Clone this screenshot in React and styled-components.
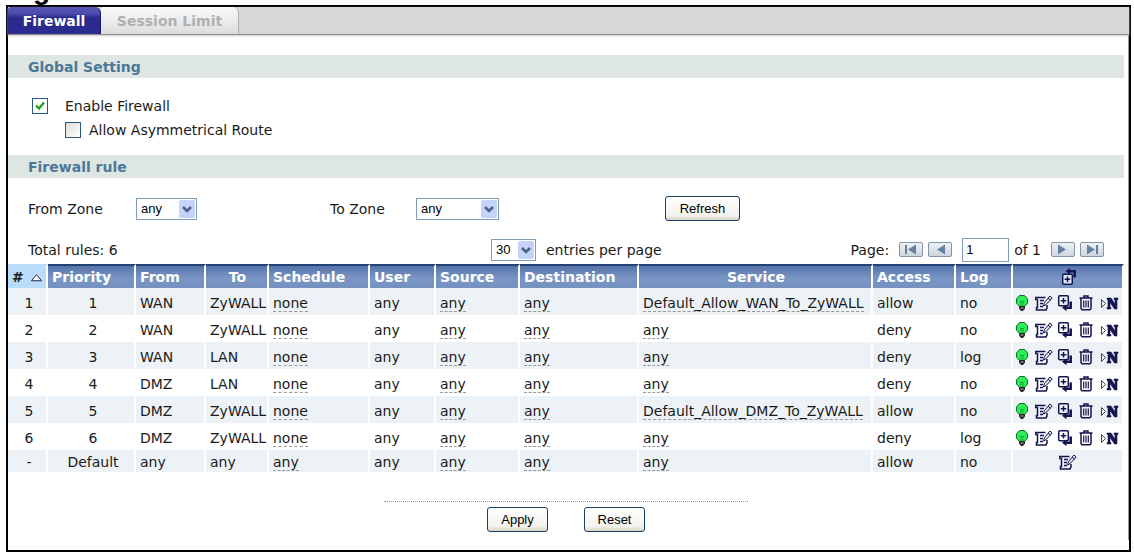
import React, { useState } from "react"
import styled, { createGlobalStyle } from "styled-components"

const NAVY = "#14144f"

const GlobalStyle = createGlobalStyle`
  * {
    box-sizing: border-box;
  }

  body {
    margin: 0;
    background: #fff;
    color: #1a1a1a;
    font-family: "DejaVu Sans", Verdana, sans-serif;
    font-size: 14px;
    line-height: 16px;
  }
`

// only the descenders of the heading reach into the page
const Caption = styled.div`
  height: 5px;
  padding-left: 8px;
  overflow: hidden;
  display: flex;
  align-items: flex-end;
  color: #000;
  font: bold 28px/31px "Liberation Sans", Arial, sans-serif;
`

const Frame = styled.main`
  margin: 0 3px 3px 6px;
  border: 2px solid #000;
  padding-bottom: 10px;
`

const TabBar = styled.nav`
  display: flex;
  height: 28px;
  background: #d7d7d7;
  border-bottom: 1px solid #8c8c8c;
  box-shadow: 0 1px 2px #ccc;
`

const Tab = styled.button`
  width: ${(p) => (p.$active ? 93 : 138)}px;
  padding: 0;
  border: 0;
  border-right: 1px solid ${(p) => (p.$active ? "#1c1c6c" : "#b0b0b0")};
  border-radius: 3px 6px 0 0;
  background: ${(p) =>
    p.$active
      ? "linear-gradient(#5a5ab4, #4a4aac 25%, #2a2a8c 40%, #2c2c90)"
      : "linear-gradient(#fafafa, #ececec 50%, #dcdcdc)"};
  color: ${(p) => (p.$active ? "#fff" : "#b0b0b0")};
  font: bold 14px/16px "DejaVu Sans", Verdana, sans-serif;
`

const Content = styled.div`
  border-right: 1px solid #999;
  padding: 20px 4px 8px 0;
`

const SectionTitle = styled.h2`
  margin: 0;
  padding: 0 20px;
  height: 23px;
  background: #dee6e4;
  color: #4b7896;
  font-size: 14px;
  line-height: 24px;
`

const Options = styled.div`
  padding: 16px 24px 13px;
`

const CheckRow = styled.label`
  display: flex;
  align-items: center;
  gap: ${(p) => (p.$nested ? 8 : 17)}px;
  height: 24px;
  margin-left: ${(p) => (p.$nested ? 33 : 0)}px;
`

const Check = styled.input`
  appearance: none;
  width: 16px;
  height: 16px;
  margin: 0;
  border: 1px solid #2c5a88;
  background: linear-gradient(135deg, #dedcd6, #fff);

  &:checked {
    background: url("data:image/svg+xml,%3Csvg xmlns='http://www.w3.org/2000/svg' viewBox='0 0 14 14'%3E%3Cpath d='M3 6.5l3 3 5-6' fill='none' stroke='%2321a121' stroke-width='2.4'/%3E%3C/svg%3E") #fff;
  }
`

const FilterRow = styled.div`
  display: grid;
  grid-template-columns: 108px 194px 86px 249px auto;
  align-items: center;
  justify-content: start;
  padding: 18px 20px 0;
`

const Select = styled.select`
  appearance: none;
  width: ${(p) => p.$width}px;
  height: 22px;
  padding: 0 4px;
  border: 1px solid #7f9db9;
  border-radius: 0;
  background: url("data:image/svg+xml,%3Csvg xmlns='http://www.w3.org/2000/svg' viewBox='0 0 16 18'%3E%3Crect width='16' height='18' rx='2' fill='%23c5d3fa'/%3E%3Cpath d='M4 7l4 4 4-4' fill='none' stroke='%234d6185' stroke-width='2.6'/%3E%3C/svg%3E")
    no-repeat right 1px center / 16px 18px #fff;
  color: #000;
  font: 13px/16px "Liberation Sans", Arial, sans-serif;
`

const Button = styled.button`
  width: ${(p) => p.$width || 61}px;
  height: 25px;
  padding: 0;
  border: 1px solid #14406e;
  border-radius: 3px;
  background: linear-gradient(#fff, #f3f2ec 80%, #d8d2c4);
  color: #000;
  font: 13px/16px "Liberation Sans", Arial, sans-serif;
`

const ListBar = styled.div`
  display: grid;
  grid-template-columns: 463px 1fr auto;
  align-items: center;
  padding: 14px 20px 0;
  height: 43px;
`

const Entries = styled.label`
  display: flex;
  align-items: center;
  gap: 10px;
`

const Pager = styled.div`
  display: flex;
  align-items: center;
  gap: 5px;
`

const PageInput = styled.input`
  width: 47px;
  height: 24px;
  margin: 0 0 0 5px;
  padding: 0 3px;
  border: 1px solid #7f9db9;
  font: 13px/16px "Liberation Sans", Arial, sans-serif;
`

const PagerButton = styled.button`
  width: 24px;
  height: 15px;
  padding: 0;
  border: 1px solid #8294a8;
  border-radius: 2px;
  background: linear-gradient(#eef1f4, #cdd6df);
  line-height: 0;
`

const PageLabel = styled.span`
  margin-right: 5px;
`

const Table = styled.table`
  width: 100%;
  table-layout: fixed;
  border-collapse: separate;
  border-spacing: 0;
`

const Th = styled.th`
  height: 24px;
  padding: 0 2px 0 4px;
  border-right: 2px solid #fff;
  border-top: 2px solid #234376;
  background: ${(p) =>
    p.$sorted ? "#b9dcfb" : "linear-gradient(#5673ac, #7a96c4 55%, #7491c0)"};
  ${(p) => p.$sorted && "border-top-color: #b9dcfb;"}
  color: ${(p) => (p.$sorted ? "#1a1a1a" : "#fff")};
  text-align: ${(p) => p.$align || "left"};
  white-space: nowrap;
`

const Row = styled.tr`
  height: ${(p) => (p.$short ? 22 : 27)}px;
  background: ${(p) => (p.$shaded ? "#edf2f6" : "#fff")};
`

const Td = styled.td`
  padding: 2px 0 0 4px;
  border-right: 2px solid #fff;
  text-align: ${(p) => p.$align || "left"};
  white-space: nowrap;
`

const ToolsCell = styled(Td)`
  padding-left: 0;
`

const Ref = styled.span`
  border-bottom: 1px dashed #999;
`

const SortArrow = styled.svg`
  margin-left: 6px;
`

const Tools = styled.div`
  display: flex;
  align-items: center;
  justify-content: ${(p) => (p.$single ? "center" : "flex-start")};
  gap: 4px;
`

const IconButton = styled.button`
  display: inline-block;
  width: 18px;
  height: 18px;
  padding: 0;
  border: 0;
  background: none;
  line-height: 0;
  vertical-align: middle;
`

const Footer = styled.footer`
  width: 364px;
  margin: 29px auto 0;
  border-top: 1px dotted #999;
  padding-top: 5px;
  display: flex;
  justify-content: center;
  gap: 36px;
`

const Icon = ({ children }) => (
  <svg width="18" height="18" viewBox="0 0 18 18" fill="none" stroke={NAVY}>
    {children}
  </svg>
)

const BulbIcon = () => (
  <Icon>
    <path
      d="M6.500 12.500L3.500 9V5L6.500 1.500h5L14.500 5v4l-3 3.500z"
      fill="#2bf05a"
      stroke="#0a6e24"
    />
    <path d="M6.500 6.500L8 8l1-1 1 1 1.500-1.500M8 8v4M10 8v4" stroke="#14a83a" />
    <path d="M6.500 12.500h5v2l-1.500 2H8l-1.500-2z" fill="#222" stroke="#222" />
    <path d="M7.500 14h3" stroke="#bbb" />
  </Icon>
)

const EditIcon = () => (
  <Icon>
    <path d="M10.500 3.500h-10v2h2v8h-1v2.500h9.500l1-2v-3" strokeWidth="1.500" />
    <path d="M5 6.500h4M5 9.500h3M5 12.500h3" strokeWidth="1.500" />
    <path d="M8.500 12l.8-3.200L15 2l2.200 2-6 6.500z" fill="#dfe6f0" />
    <path d="M13 4l2.500 2.300" />
  </Icon>
)

const AddIcon = () => (
  <Icon>
    <rect x="1.700" y="1.700" width="9.600" height="10" rx="1" strokeWidth="1.500" />
    <path d="M6.500 4v5.500M3.800 6.700h5.500" strokeWidth="1.500" />
    <path d="M13.700 7.500v6.200H8" strokeWidth="2.500" />
    <path d="M9.500 10.200v7L5 13.700z" fill={NAVY} stroke="none" />
  </Icon>
)

const AddFirstIcon = () => (
  <Icon>
    <rect x="2.700" y="6.200" width="9.600" height="10" rx="1" fill="#dce5f3" strokeWidth="1.500" />
    <path d="M7.500 8.500V14M4.700 11.200h5.600" strokeWidth="1.500" />
    <path d="M14.700 9.500V3.300H9" strokeWidth="2.500" />
    <path d="M10 0v6.500L5.500 3.300z" fill={NAVY} stroke="none" />
  </Icon>
)

const TrashIcon = () => (
  <Icon>
    <path d="M.5 4h13M5 3.500V2h4v1.500M2 4.500v10l1 1.200h8l1-1.200v-10" strokeWidth="1.500" />
    <path d="M4.700 6.500v7M7 6.500v7M9.300 6.500v7" strokeWidth="1.200" />
  </Icon>
)

const MoveIcon = () => (
  <Icon>
    <path d="M.5 5.500v8l4-4z" stroke="#444" />
    <path
      d="M6 4h4l4 6V5.500h-1V4h4v1.500h-1V15h-2.500L9 8.500v5h1V15H6v-1.500h1v-8H6z"
      fill={NAVY}
      stroke={NAVY}
      strokeWidth=".6"
    />
  </Icon>
)

const PagerIcon = ({ back, end }) => (
  <svg width="22" height="13" viewBox="0 0 22 13" fill="#6482a0">
    <path d={back ? "M16 1.500v10L8 6.500z" : "M6 1.500v10l8-5z"} />
    {end && <path d={back ? "M5 2h2v9H5z" : "M15 2h2v9h-2z"} />}
  </svg>
)

const COLUMNS = [
  { name: "Priority", width: 88 },
  { name: "From", width: 70 },
  { name: "To", width: 63, align: "center" },
  { name: "Schedule", width: 101 },
  { name: "User", width: 66 },
  { name: "Source", width: 84 },
  { name: "Destination", width: 119 },
  { name: "Service", width: 234, align: "center" },
  { name: "Access", width: 83 },
  { name: "Log", width: 57 },
]

const RULES = [
  ["1", "1", "WAN", "ZyWALL", "none", "any", "any", "any", "Default_Allow_WAN_To_ZyWALL", "allow", "no"],
  ["2", "2", "WAN", "ZyWALL", "none", "any", "any", "any", "any", "deny", "no"],
  ["3", "3", "WAN", "LAN", "none", "any", "any", "any", "any", "deny", "log"],
  ["4", "4", "DMZ", "LAN", "none", "any", "any", "any", "any", "deny", "no"],
  ["5", "5", "DMZ", "ZyWALL", "none", "any", "any", "any", "Default_Allow_DMZ_To_ZyWALL", "allow", "no"],
  ["6", "6", "DMZ", "ZyWALL", "none", "any", "any", "any", "any", "deny", "log"],
  ["-", "Default", "any", "any", "any", "any", "any", "any", "any", "allow", "no"],
]

// columns that point to another object get the dashed underline
const REF_COLUMNS = [4, 6, 7, 8]

const RULE_TOOLS = [
  ["Activate", BulbIcon],
  ["Edit", EditIcon],
  ["Add", AddIcon],
  ["Remove", TrashIcon],
  ["Move", MoveIcon],
]

const RuleRow = ({ rule, shaded }) => {
  const isDefault = rule[0] === "-"
  const tools = isDefault ? [RULE_TOOLS[1]] : RULE_TOOLS

  return (
    <Row $shaded={shaded} $short={isDefault}>
      {rule.map((value, index) => (
        <Td key={index} $align={index < 2 ? "center" : "left"}>
          {REF_COLUMNS.includes(index) ? <Ref>{value}</Ref> : value}
        </Td>
      ))}
      <ToolsCell>
        <Tools $single={isDefault}>
          {tools.map(([label, ToolIcon]) => (
            <IconButton key={label} type="button" aria-label={label}>
              <ToolIcon />
            </IconButton>
          ))}
        </Tools>
      </ToolsCell>
    </Row>
  )
}

const App = () => {
  const [enabled, setEnabled] = useState(true)
  const [asymmetrical, setAsymmetrical] = useState(false)
  const [page, setPage] = useState("1")

  return (
    <>
      <GlobalStyle />
      <Caption>Fig</Caption>
      <Frame>
        <TabBar>
          <Tab type="button" $active>
            Firewall
          </Tab>
          <Tab type="button">Session Limit</Tab>
        </TabBar>

        <Content>
          <SectionTitle>Global Setting</SectionTitle>
          <Options>
            <CheckRow>
              <Check
                type="checkbox"
                checked={enabled}
                onChange={(e) => setEnabled(e.target.checked)}
              />
              Enable Firewall
            </CheckRow>
            <CheckRow $nested>
              <Check
                type="checkbox"
                checked={asymmetrical}
                onChange={(e) => setAsymmetrical(e.target.checked)}
              />
              Allow Asymmetrical Route
            </CheckRow>
          </Options>

          <SectionTitle>Firewall rule</SectionTitle>
          <FilterRow>
            <label htmlFor="from-zone">From Zone</label>
            <Select id="from-zone" $width={61}>
              <option>any</option>
            </Select>
            <label htmlFor="to-zone">To Zone</label>
            <Select id="to-zone" $width={83}>
              <option>any</option>
            </Select>
            <Button type="button" $width={75}>
              Refresh
            </Button>
          </FilterRow>

          <ListBar>
            <span>Total rules: 6</span>
            <Entries>
              <Select $width={45}>
                <option>30</option>
              </Select>
              entries per page
            </Entries>
            <Pager>
              <PageLabel as="label" htmlFor="page">
                Page:
              </PageLabel>
              <PagerButton type="button" aria-label="First page">
                <PagerIcon back end />
              </PagerButton>
              <PagerButton type="button" aria-label="Previous page">
                <PagerIcon back />
              </PagerButton>
              <PageInput
                id="page"
                value={page}
                onChange={(e) => setPage(e.target.value)}
              />
              <PageLabel>of 1</PageLabel>
              <PagerButton type="button" aria-label="Next page">
                <PagerIcon />
              </PagerButton>
              <PagerButton type="button" aria-label="Last page">
                <PagerIcon end />
              </PagerButton>
            </Pager>
          </ListBar>

          <Table>
            <colgroup>
              <col width="40" />
              {COLUMNS.map(({ name, width }) => (
                <col key={name} width={width} />
              ))}
              <col />
            </colgroup>
            <thead>
              <tr>
                <Th $sorted>
                  #
                  <SortArrow width="13" height="9" viewBox="0 0 14 9">
                    <path d="M1.500 8h11L7 1.500z" fill="#fff" stroke={NAVY} />
                  </SortArrow>
                </Th>
                {COLUMNS.map(({ name, align }) => (
                  <Th key={name} $align={align}>
                    {name}
                  </Th>
                ))}
                <Th $align="center">
                  <IconButton type="button" aria-label="Add first rule">
                    <AddFirstIcon />
                  </IconButton>
                </Th>
              </tr>
            </thead>
            <tbody>
              {RULES.map((rule, index) => (
                <RuleRow key={rule[0]} rule={rule} shaded={index % 2 === 0} />
              ))}
            </tbody>
          </Table>

          <Footer>
            <Button type="button">Apply</Button>
            <Button type="button">Reset</Button>
          </Footer>
        </Content>
      </Frame>
    </>
  )
}

export default App
